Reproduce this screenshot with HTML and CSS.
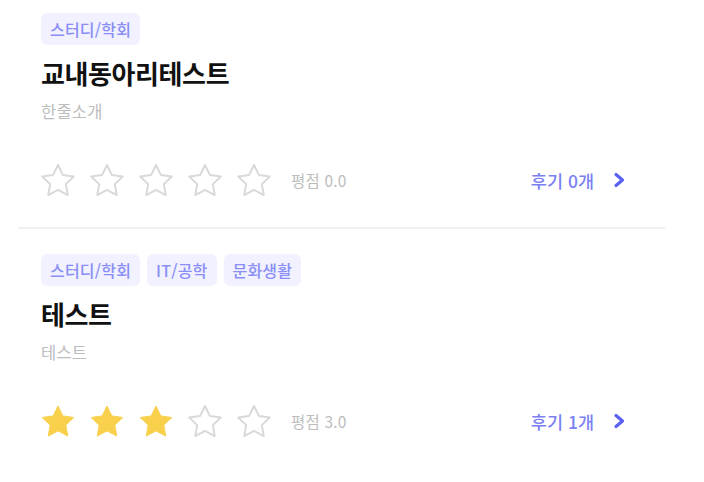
FILE: index.html
```html
<!DOCTYPE html>
<html lang="ko">
<head>
<meta charset="utf-8">
<link rel="stylesheet" href="styles.css">
</head>
<body>
<svg width="0" height="0" class="defs">
  <defs>
    <path id="star" d="M12 2.2l2.95 6.1 6.7.95-4.85 4.7 1.15 6.65L12 17.45 6.05 20.6 7.2 13.950 2.35 9.25l6.7-.95z"/>
    <symbol id="chev" viewBox="0 0 14 16"><polyline points="4,2.5 10.5,8 4,13.5" fill="none" stroke="currentColor" stroke-width="3.2" stroke-linecap="round" stroke-linejoin="round"/></symbol>
  </defs>
</svg>
<div class="list">
  <div class="card">
    <div class="tags"><span class="tag">스터디/학회</span></div>
    <div class="title">교내동아리테스트</div>
    <div class="desc">한줄소개</div>
    <div class="row">
      <div class="rating">
        <svg class="star empty" viewBox="1.6 1.4 20.8 20"><use href="#star"/></svg>
        <svg class="star empty" viewBox="1.6 1.4 20.8 20"><use href="#star"/></svg>
        <svg class="star empty" viewBox="1.6 1.4 20.8 20"><use href="#star"/></svg>
        <svg class="star empty" viewBox="1.6 1.4 20.8 20"><use href="#star"/></svg>
        <svg class="star empty" viewBox="1.6 1.4 20.8 20"><use href="#star"/></svg>
        <span class="score">평점 0.0</span>
      </div>
      <div class="reviews"><span>후기 0개</span><svg class="chev"><use href="#chev"/></svg></div>
    </div>
  </div>
  <div class="card">
    <div class="tags"><span class="tag">스터디/학회</span><span class="tag">IT/공학</span><span class="tag">문화생활</span></div>
    <div class="title">테스트</div>
    <div class="desc">테스트</div>
    <div class="row">
      <div class="rating">
        <svg class="star full" viewBox="1.6 1.4 20.8 20"><use href="#star"/></svg>
        <svg class="star full" viewBox="1.6 1.4 20.8 20"><use href="#star"/></svg>
        <svg class="star full" viewBox="1.6 1.4 20.8 20"><use href="#star"/></svg>
        <svg class="star empty" viewBox="1.6 1.4 20.8 20"><use href="#star"/></svg>
        <svg class="star empty" viewBox="1.6 1.4 20.8 20"><use href="#star"/></svg>
        <span class="score">평점 3.0</span>
      </div>
      <div class="reviews"><span>후기 1개</span><svg class="chev"><use href="#chev"/></svg></div>
    </div>
  </div>
</div>
</body>
</html>
```
FILE: styles.css
```css
* { box-sizing: border-box; }
body {
  margin: 0;
  background: #fff;
  font-family: "Noto Sans CJK KR", "Noto Sans", sans-serif;
}
.defs { position: absolute; }
.list {
  width: 647px;
  margin-left: 18px;
}
.card {
  padding: 25px 39px 30px 23px;
  border-bottom: 2px solid #f0f0f0;
}
.card:first-child { padding-top: 13px; }
.card:last-child { border-bottom: none; }
.tags {
  display: flex;
  gap: 7px;
}
.tag {
  height: 32px;
  line-height: 32px;
  padding: 0 9px;
  border-radius: 6px;
  background: #f1f1ff;
  color: #8a8ef5;
  font-size: 16px;
  font-weight: 500;
  letter-spacing: 0.2px;
}
.title {
  margin-top: 11px;
  height: 34px;
  line-height: 34px;
  font-size: 26px;
  font-weight: 700;
  color: #111;
  letter-spacing: -0.4px;
}
.desc {
  margin-top: 10px;
  height: 22px;
  line-height: 22px;
  font-size: 16.5px;
  color: #bdbdbd;
  letter-spacing: 0.2px;
}
.row {
  margin-top: 41px;
  height: 34px;
  display: flex;
  align-items: center;
  justify-content: space-between;
}
.rating {
  display: flex;
  align-items: center;
  gap: 15px;
}
.star {
  width: 34px;
  height: 34px;
  display: block;
}
.star.empty { fill: none; stroke: #d9d9d9; stroke-width: 1.2; stroke-linejoin: round; }
.star.full { fill: #f9d04b; stroke: #f9d04b; stroke-width: 0.6; stroke-linejoin: round; }
.score {
  margin-left: 5px;
  font-size: 15.5px;
  color: #bdbdbd;
  letter-spacing: 0.2px;
}
.reviews {
  display: flex;
  align-items: center;
  gap: 18px;
  color: #7b80f2;
  font-size: 17.5px;
  font-weight: 500;
}
.chev {
  width: 14px;
  height: 16px;
  color: #5a60f2;
}
```
